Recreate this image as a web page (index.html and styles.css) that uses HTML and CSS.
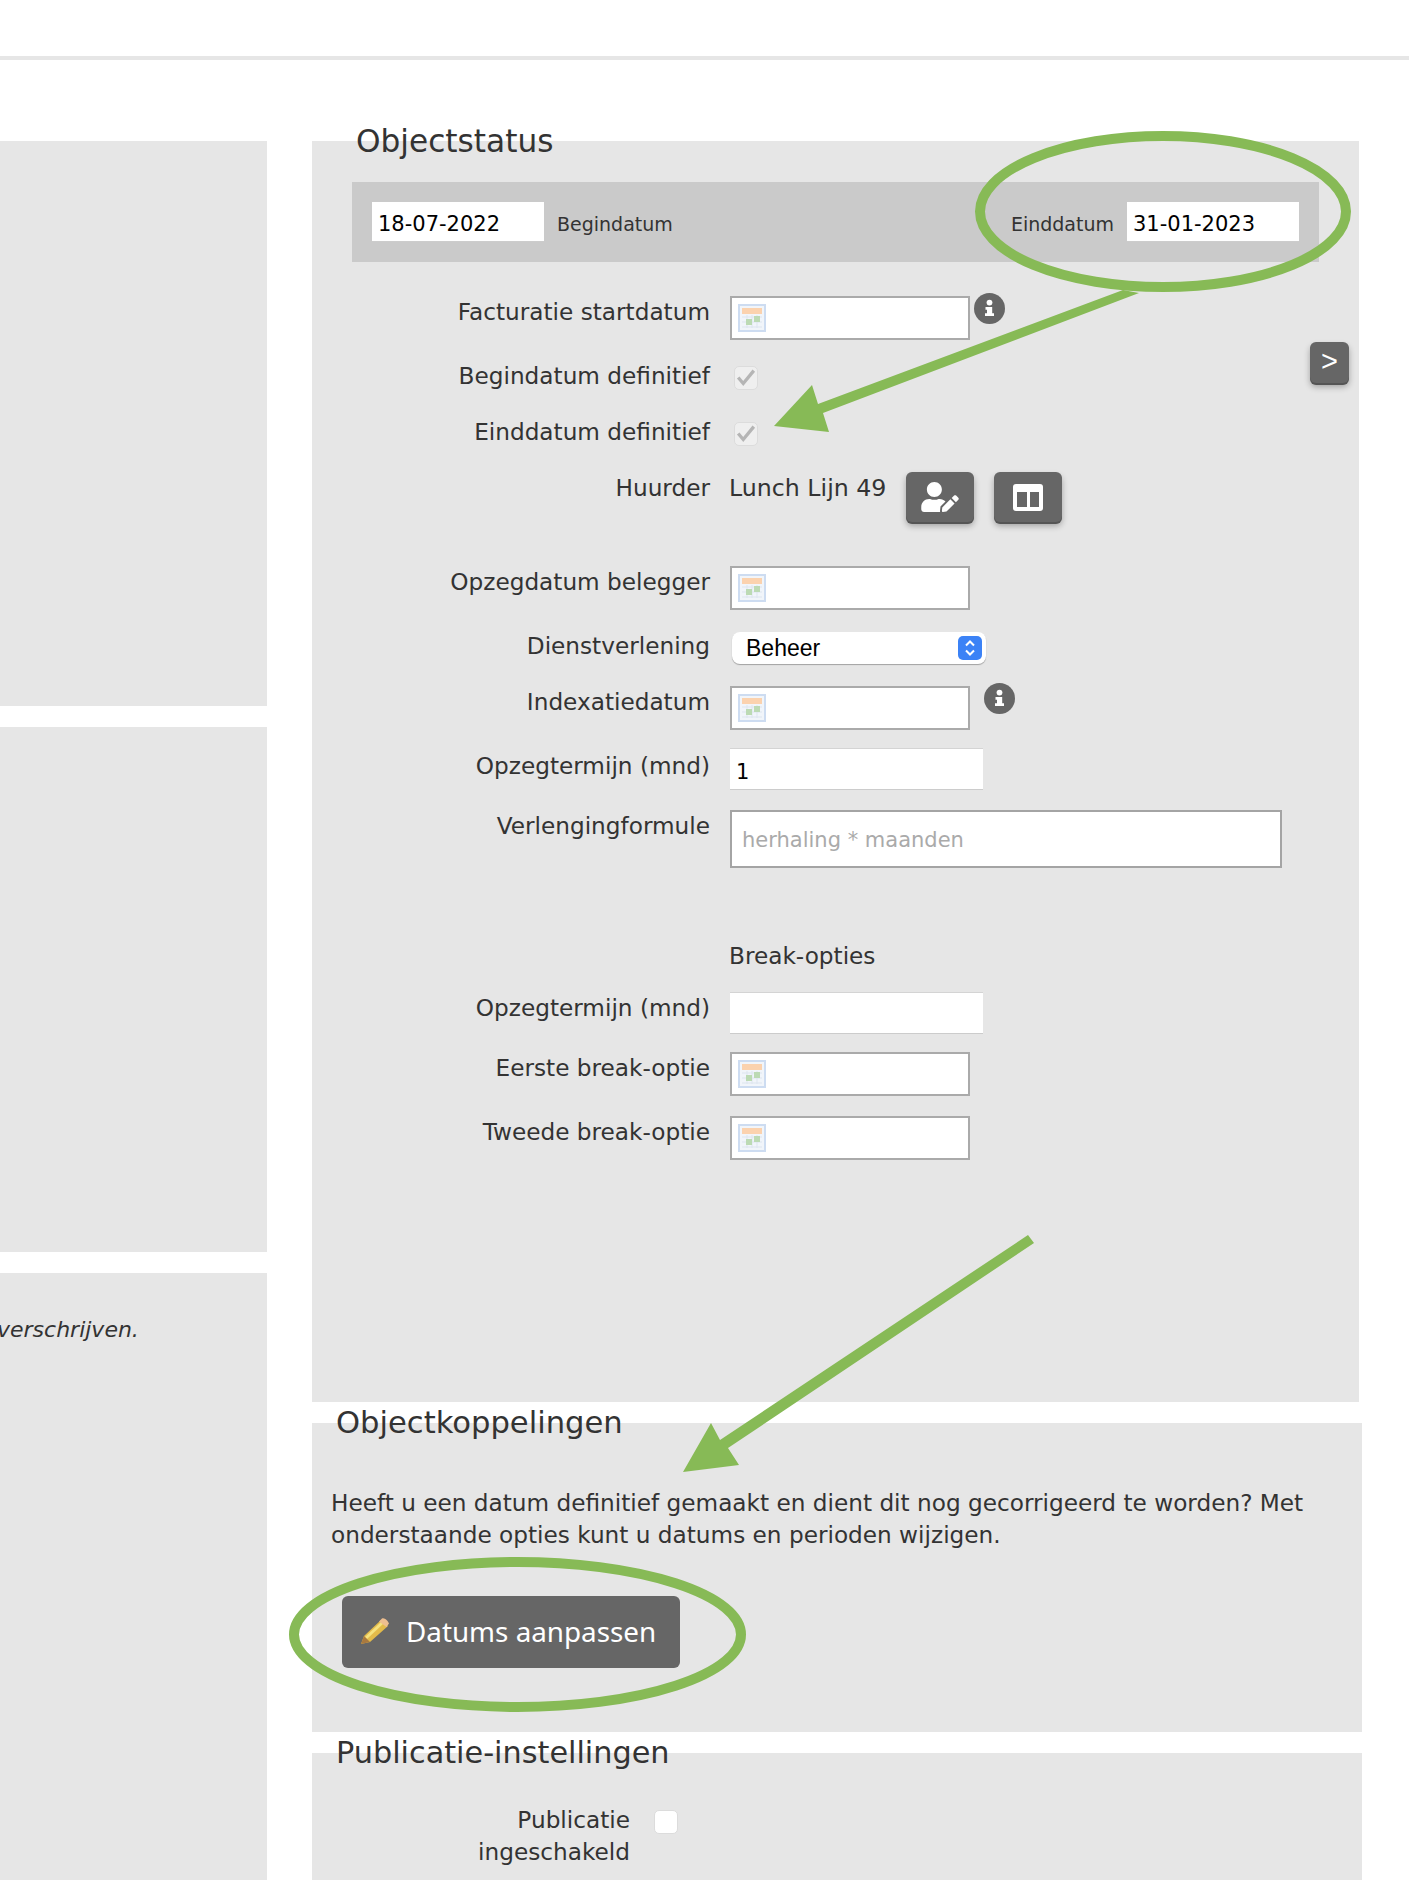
FILE: index.html
```html
<!DOCTYPE html>
<html lang="nl">
<head>
    <meta charset="UTF-8">
    <meta name="viewport" content="width=device-width, initial-scale=1.0">
    <title>Objectstatus</title>
    <link rel="stylesheet" href="styles.css">
</head>
<body>
    <svg width="0" height="0" class="icon-defs">
        <symbol id="cal" viewBox="0 0 28 28">
            <rect width="28" height="28" fill="#cddcf1"/>
            <rect x="2" y="2" width="24" height="24" fill="#f1f5fa"/>
            <rect x="4" y="4" width="20" height="6" fill="#fbd2ae"/>
            <path d="M4 13h20M4 18h20M4 23h20M9 11v13M14 11v13M19 11v13" stroke="#dde5ef" stroke-width="1"/>
            <rect x="16" y="12" width="6" height="6" fill="#bcdab4"/>
            <rect x="8" y="15" width="6" height="6" fill="#bcdab4"/>
        </symbol>
        <symbol id="info" viewBox="0 0 31 31">
            <circle cx="15.500" cy="15.500" r="15.500" fill="#666"/>
            <circle cx="15.500" cy="9.600" r="2.900" fill="#fff"/>
            <path d="M11.500 14h6.700v6.200h1.800v2.800h-9v-2.800h2v-3.400h-1.500z" fill="#fff"/>
        </symbol>
        <symbol id="check" viewBox="0 0 24 24">
            <path d="M3.500 11.500L9 18 20.500 4" fill="none" stroke="#b5b5b5" stroke-width="3.600"/>
        </symbol>
    </svg>

    <div class="top-line"></div>

    <div class="page">
        <div class="side-col">
            <div class="side-panel side-first"></div>
            <div class="side-panel side-second"></div>
            <div class="side-panel side-third">
                <p class="side-note">verschrijven.</p>
            </div>
        </div>

        <div class="main-col">
            <section class="panel panel-status">
                <h2 class="panel-title title-status">Objectstatus</h2>
                <div class="date-bar">
                    <div class="date-pair">
                        <input class="bar-input" type="text" value="18-07-2022">
                        <span class="bar-label">Begindatum</span>
                    </div>
                    <div class="date-pair">
                        <span class="bar-label">Einddatum</span>
                        <input class="bar-input" type="text" value="31-01-2023">
                    </div>
                </div>

                <button class="side-btn" type="button">&gt;</button>

                <div class="form-grid">
                    <label class="form-label">Facturatie startdatum</label>
                    <div class="form-field">
                        <div class="date-input"><svg class="cal-icon"><use href="#cal"/></svg></div>
                        <svg class="info-icon"><use href="#info"/></svg>
                    </div>

                    <label class="form-label">Begindatum definitief</label>
                    <div class="form-field">
                        <span class="checkbox"><svg class="check-icon"><use href="#check"/></svg></span>
                    </div>

                    <label class="form-label">Einddatum definitief</label>
                    <div class="form-field">
                        <span class="checkbox"><svg class="check-icon"><use href="#check"/></svg></span>
                    </div>

                    <label class="form-label">Huurder</label>
                    <div class="form-field">
                        <span class="form-value tenant-name">Lunch Lijn 49</span>
                        <button class="icon-btn" type="button">
                            <svg width="38" height="30" viewBox="0 0 640 512"><path fill="#fff" d="M224 256c70.7 0 128-57.3 128-128S294.7 0 224 0 96 57.3 96 128s57.3 128 128 128zm89.6 32h-16.7c-22.2 10.2-46.9 16-72.9 16s-50.6-5.8-72.9-16h-16.7C60.2 288 0 348.2 0 422.4V464c0 26.5 21.5 48 48 48h274.9c-2.4-6.8-3.4-14-2.6-21.3l6.8-60.9 1.2-11.1 7.9-7.9 77.3-77.3c-24.5-27.7-60-45.5-99.9-45.5zm45.3 145.3l-6.8 61c-1.1 10.2 7.5 18.8 17.6 17.6l60.9-6.8 137.9-137.9-71.7-71.7-137.9 137.8zM633 268.9L595.1 231c-9.3-9.3-24.5-9.3-33.8 0l-37.8 37.8-4.1 4.1 71.8 71.7 41.8-41.8c9.3-9.4 9.3-24.5 0-33.9z"/></svg>
                        </button>
                        <button class="icon-btn" type="button">
                            <svg width="30" height="27" viewBox="0 0 30 27"><rect width="30" height="27" rx="3" fill="#fff"/><rect x="4" y="8" width="10" height="15" fill="#666"/><rect x="17" y="8" width="9" height="15" fill="#666"/></svg>
                        </button>
                    </div>

                    <label class="form-label">Opzegdatum belegger</label>
                    <div class="form-field">
                        <div class="date-input"><svg class="cal-icon"><use href="#cal"/></svg></div>
                    </div>

                    <label class="form-label">Dienstverlening</label>
                    <div class="form-field">
                        <div class="select-box">
                            <span>Beheer</span>
                            <span class="select-caret">
                                <svg width="12" height="18" viewBox="0 0 12 18"><path d="M2 6.500l4-4 4 4M2 11.500l4 4 4-4" fill="none" stroke="#fff" stroke-width="2"/></svg>
                            </span>
                        </div>
                    </div>

                    <label class="form-label">Indexatiedatum</label>
                    <div class="form-field">
                        <div class="date-input"><svg class="cal-icon"><use href="#cal"/></svg></div>
                        <svg class="info-icon info-wide"><use href="#info"/></svg>
                    </div>

                    <label class="form-label label-low">Opzegtermijn (mnd)</label>
                    <div class="form-field">
                        <input class="plain-input" type="text" value="1">
                    </div>

                    <label class="form-label">Verlengingformule</label>
                    <div class="form-field">
                        <input class="wide-input" type="text" placeholder="herhaling * maanden">
                    </div>

                    <span></span>
                    <div class="form-field">
                        <span class="form-value">Break-opties</span>
                    </div>

                    <label class="form-label">Opzegtermijn (mnd)</label>
                    <div class="form-field">
                        <input class="plain-input" type="text">
                    </div>

                    <label class="form-label">Eerste break-optie</label>
                    <div class="form-field">
                        <div class="date-input"><svg class="cal-icon"><use href="#cal"/></svg></div>
                    </div>

                    <label class="form-label">Tweede break-optie</label>
                    <div class="form-field">
                        <div class="date-input"><svg class="cal-icon"><use href="#cal"/></svg></div>
                    </div>
                </div>
            </section>

            <section class="panel panel-links">
                <h2 class="panel-title">Objectkoppelingen</h2>
                <p class="links-text">Heeft u een datum definitief gemaakt en dient dit nog gecorrigeerd te worden? Met onderstaande opties kunt u datums en perioden wijzigen.</p>
                <button class="edit-btn" type="button">
                    <svg width="30" height="28" viewBox="0 0 30 28">
                        <path d="M1 27l3-8L21 3l7 6L10 25z" fill="#e3bb4a"/>
                        <path d="M5 20L21 5l2 2L7 22z" fill="#f5e27f"/>
                        <path d="M19 4.500l3-3c2-1.500 6 2 7 5l-2.500 3.500z" fill="#eebf90"/>
                        <path d="M1 27l3-8 6 6z" fill="#a9793f"/>
                    </svg>
                    Datums aanpassen
                </button>
            </section>

            <section class="panel panel-publish">
                <h2 class="panel-title title-publish">Publicatie-instellingen</h2>
                <div class="publish-row">
                    <label class="publish-label">Publicatie ingeschakeld</label>
                    <span class="checkbox checkbox-on"></span>
                </div>
            </section>
        </div>
    </div>

    <!-- groene aantekeningen over de pagina -->
    <svg class="notes" width="1416" height="1880" viewBox="0 0 1416 1880">
        <g fill="none" stroke="#87ba56" stroke-width="10">
            <ellipse cx="1163" cy="211.500" rx="183" ry="75.500"/>
            <ellipse cx="517.500" cy="1634.500" rx="223.500" ry="72.500"/>
        </g>
        <g fill="#87ba56">
            <polygon points="774,426 812,385 818,404 1123,290 1139,293 823,413 829,432"/>
            <polygon points="683,1472 711,1423 720,1440 1028,1235 1034,1243 728,1448 739,1465"/>
        </g>
    </svg>
</body>
</html>
```

FILE: styles.css
```css
* {
    box-sizing: border-box;
    font-family: 'DejaVu Sans', sans-serif;
}

html, body {
    height: 1880px;
}

body {
    position: relative;
    background-color: white;
    color: #333;
    margin: 0;
    overflow: hidden;
}

.icon-defs {
    position: absolute;
}

.top-line {
    width: 1409px;
    height: 4px;
    margin-top: 56px;
    background-color: #e6e6e6;
}

.page {
    display: flex;
    gap: 45px;
    padding-top: 81px;
    height: 1820px;
}

.side-col {
    display: flex;
    flex-direction: column;
    gap: 21px;
    width: 267px;
}

.side-panel {
    background-color: #e6e6e6;
}

.side-first {
    height: 565px;
}

.side-second {
    height: 525px;
}

.side-third {
    flex: 1;
    padding-top: 41px;
}

.side-note {
    margin: 0 0 0 -3px;
    font-size: 22px;
    line-height: 32px;
    font-style: italic;
}

.main-col {
    display: flex;
    flex-direction: column;
    gap: 21px;
    width: 1050px;
}

.panel {
    position: relative;
    background-color: #e6e6e6;
}

.panel-status {
    width: 1047px;
    height: 1261px;
}

.panel-links {
    height: 309px;
}

.panel-publish {
    flex: 1;
}

.panel-title {
    margin: -20px 0 -1px 24px;
    font-size: 30.6px;
    line-height: 40px;
    font-weight: 400;
}

.title-status {
    margin-left: 44px;
    font-size: 31.2px;
}

.title-publish {
    font-size: 30.3px;
}

.date-bar {
    display: flex;
    justify-content: space-between;
    align-items: center;
    width: 967px;
    height: 80px;
    margin: 22px 0 0 40px;
    padding: 0 20px;
    background-color: #cacaca;
}

.date-pair {
    display: flex;
    align-items: center;
    gap: 13px;
}

.bar-label {
    font-size: 19px;
    margin-top: 4px;
}

.bar-input {
    width: 172px;
    height: 40px;
    padding: 5px 6px 0;
    border: none;
    border-bottom: 1px solid #ccc;
    background-color: white;
    font-size: 21px;
    color: black;
}

.side-btn {
    position: absolute;
    top: 201px;
    left: 998px;
    width: 39px;
    height: 41px;
    padding: 0 0 3px;
    border: none;
    border-radius: 6px;
    background-color: #666;
    box-shadow: 0 2px 0 #555, 0 4px 6px rgba(0, 0, 0, 0.3);
    color: white;
    font-family: 'Liberation Sans', sans-serif;
    font-size: 29px;
}

.form-grid {
    display: grid;
    grid-template-columns: 398px 1fr;
    grid-template-rows: 64px 56px 56px 94px 64px 56px 62px 62px 130px 52px 60px 64px 44px;
    column-gap: 20px;
    margin-top: 34px;
}

.form-label {
    font-size: 23.2px;
    line-height: 32px;
    text-align: right;
}

.label-low {
    margin-top: 2px;
}

.form-field {
    display: flex;
    align-items: flex-start;
}

.form-value {
    margin-left: -1px;
    font-size: 23.2px;
    line-height: 32px;
}

.tenant-name {
    font-size: 23.7px;
}

.date-input {
    display: flex;
    align-items: center;
    width: 240px;
    height: 44px;
    padding-left: 6px;
    border: 2px solid #aaa;
    background-color: white;
}

.cal-icon {
    width: 28px;
    height: 28px;
}

.info-icon {
    width: 31px;
    height: 31px;
    margin: -3px 0 0 4px;
}

.info-wide {
    margin-left: 14px;
}

.checkbox {
    display: block;
    width: 24px;
    height: 24px;
    margin: 6px 0 0 4px;
    border: 1px solid #dcdcdc;
    border-radius: 5px;
    background-color: #efefef;
}

.check-icon {
    display: block;
    width: 22px;
    height: 22px;
}

.checkbox-on {
    margin: 6px 0 0 24px;
    background-color: white;
}

.icon-btn {
    display: flex;
    align-items: center;
    justify-content: center;
    width: 68px;
    height: 50px;
    margin-left: 20px;
    padding: 0;
    border: none;
    border-radius: 6px;
    background-color: #666;
    box-shadow: 0 2px 0 #555, 0 4px 6px rgba(0, 0, 0, 0.3);
}

.select-box {
    display: flex;
    align-items: center;
    justify-content: space-between;
    width: 254px;
    height: 32px;
    margin: 2px 0 0 2px;
    padding: 0 4px 0 14px;
    border-radius: 8px;
    background-color: white;
    box-shadow: 0 1px 1px rgba(0, 0, 0, 0.3);
    font-size: 23px;
    color: black;
}

.select-box span {
    font-family: 'Liberation Sans', sans-serif;
}

.select-caret {
    display: flex;
    align-items: center;
    justify-content: center;
    width: 24px;
    height: 24px;
    border-radius: 5px;
    background-color: #3b82f6;
}

.plain-input {
    width: 253px;
    height: 42px;
    padding: 5px 6px 0;
    border: none;
    border-top: 1px solid #d4d4d4;
    border-bottom: 1px solid #ccc;
    background-color: white;
    font-size: 21px;
    color: black;
}

.wide-input {
    width: 552px;
    height: 58px;
    padding: 2px 10px 0;
    border: 2px solid #a4a4a4;
    background-color: white;
    font-size: 21px;
}

.wide-input::placeholder {
    color: #aaa;
}

.links-text {
    margin: 45px 24px 0 19px;
    font-size: 23.2px;
    line-height: 32px;
}

.edit-btn {
    display: flex;
    align-items: center;
    gap: 16px;
    width: 338px;
    height: 72px;
    margin: 45px 0 0 30px;
    padding: 0 0 2px 18px;
    border: none;
    border-radius: 6px;
    background-color: #666;
    color: white;
    font-family: 'Noto Sans', sans-serif;
    font-size: 27.8px;
}

.publish-row {
    display: flex;
    align-items: flex-start;
    margin-top: 32px;
}

.publish-label {
    width: 318px;
    font-size: 23.2px;
    line-height: 32px;
    text-align: right;
    padding-left: 120px;
}

.notes {
    position: absolute;
    top: 0;
    left: 0;
    pointer-events: none;
}
```
